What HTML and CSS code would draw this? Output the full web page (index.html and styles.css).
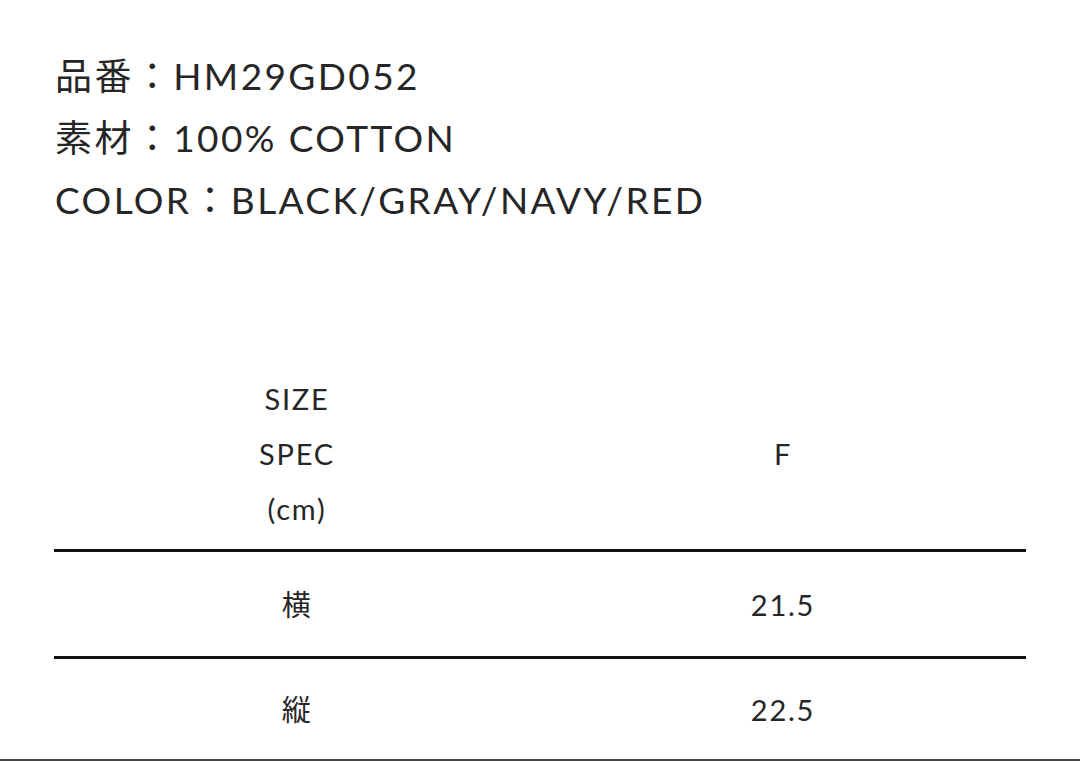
FILE: index.html
```html
<!DOCTYPE html>
<html lang="ja">
<head>
<meta charset="utf-8">
<title>Spec</title>
<link rel="stylesheet" href="styles.css">
</head>
<body>
<main class="page">
  <section class="info">
    <p class="info-line">品番：HM29GD052</p>
    <p class="info-line">素材：100% COTTON</p>
    <p class="info-line">COLOR：BLACK/GRAY/NAVY/RED</p>
  </section>
  <section class="spec">
    <div class="row head">
      <div class="cell">SIZE<br>SPEC<br>(cm)</div>
      <div class="cell">F</div>
    </div>
    <div class="row">
      <div class="cell">横</div>
      <div class="cell">21.5</div>
    </div>
    <div class="row last">
      <div class="cell">縦</div>
      <div class="cell">22.5</div>
    </div>
  </section>
</main>
<div class="edge"></div>
</body>
</html>
```

FILE: styles.css
```css
html, body {
  margin: 0;
  padding: 0;
  background: #fff;
}
body {
  width: 1080px;
  height: 761px;
  overflow: hidden;
  position: relative;
  color: #262626;
  font-family: Lato, "Noto Sans CJK JP", sans-serif;
  font-weight: 400;
}
.page {
  padding: 45px 54px 0 54px;
}
.info-line {
  margin: 0;
  font-size: 37px;
  line-height: 62px;
  letter-spacing: 0.065em;
  padding-left: 1px;
}
.spec {
  margin-top: 140px;
}
.row {
  display: grid;
  grid-template-columns: 1fr 1fr;
  border-bottom: 3px solid #111;
  height: 104px;
  align-items: center;
}
.row.head {
  height: 165px;
  padding-bottom: 13px;
}
.row.last {
  border-bottom: none;
  height: 100px;
}
.cell {
  text-align: center;
  font-size: 29px;
  letter-spacing: 0.06em;
  line-height: 55px;
}
.edge {
  position: absolute;
  left: 0;
  right: 0;
  bottom: 0;
  height: 2px;
  background: #444;
}
```
